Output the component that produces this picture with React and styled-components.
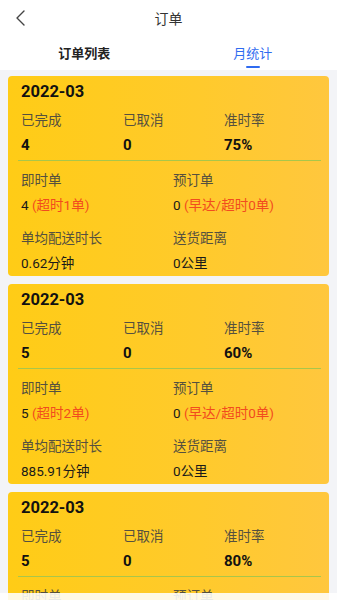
import React from 'react'
import styled, { createGlobalStyle } from 'styled-components'

const GlobalStyle = createGlobalStyle`
   body {
      margin: 0;
      background: #f3f4f7;
      font-family: Roboto, "Noto Sans CJK SC", sans-serif;
   }
`

const Page = styled.div`
   height: 600px;
   overflow: hidden;
   position: relative;
   background: #f3f4f7;
`

const Header = styled.header`
   background: #ffffff;
`

const TitleBar = styled.div`
   height: 36px;
   display: flex;
   align-items: center;
   justify-content: center;
   position: relative;
   font-size: 14px;
   color: #333;
`

const BackButton = styled.span`
   position: absolute;
   left: 14px;
   top: 9px;
   display: flex;
`

const Tabs = styled.nav`
   display: flex;
   height: 34px;
`

const Tab = styled.div`
   flex: 1;
   display: flex;
   flex-direction: column;
   align-items: center;
   padding-top: 7px;
   font-size: 13px;
   font-weight: ${p => (p.active ? 400 : 700)};
   color: ${p => (p.active ? '#2f6bf0' : '#222')};

   &::after {
      content: '';
      margin-top: 4px;
      width: 14px;
      height: 2px;
      border-radius: 1px;
      background: ${p => (p.active ? '#2f6bf0' : 'transparent')};
   }
`

const List = styled.div`
   display: flex;
   flex-direction: column;
   gap: 8px;
   padding: 6px 8px 0;
`

const Card = styled.div`
   background: linear-gradient(90deg, #ffcc16 0%, #ffca2c 60%, #ffc73e 100%);
   border-radius: 4px;
   padding: 6px 8px 3px 13px;
   box-sizing: border-box;
   height: 200px;
`

const Month = styled.div`
   font-size: 16.5px;
   font-weight: 700;
   line-height: 20px;
   color: #111;
`

const Grid = styled.div`
   display: grid;
   grid-template-columns: ${p => p.cols};
   row-gap: 5px;
   margin-top: ${p => p.top}px;
`

const Label = styled.div`
   font-size: 13.5px;
   line-height: 20px;
   color: #55503f;
`

const BigValue = styled.div`
   font-size: 15px;
   font-weight: 700;
   line-height: 20px;
   color: #111;
`

const Value = styled.div`
   font-size: 13.5px;
   line-height: 20px;
   color: #1a1a1a;
`

const Warn = styled.span`
   color: #f24b1e;
`

const Divider = styled.div`
   height: 1px;
   background: #a9c64a;
   margin: 5px 0 0 -3px;
`

const BottomFade = styled.div`
   position: absolute;
   left: 0;
   right: 0;
   bottom: 0;
   height: 7px;
   background: rgba(255, 255, 255, 0.88);
`

const data = [
   { done: 4, cancel: 0, rate: '75%', instant: 4, late: 1, avg: '0.62' },
   { done: 5, cancel: 0, rate: '60%', instant: 5, late: 2, avg: '885.91' },
   { done: 5, cancel: 0, rate: '80%', instant: 5, late: 1, avg: '12.30' },
]

const StatCard = ({ item }) => (
   <Card>
      <Month>2022-03</Month>
      <Grid cols="102px 101px 1fr" top={8}>
         <Label>已完成</Label>
         <Label>已取消</Label>
         <Label>准时率</Label>
         <BigValue>{item.done}</BigValue>
         <BigValue>{item.cancel}</BigValue>
         <BigValue>{item.rate}</BigValue>
      </Grid>
      <Divider />
      <Grid cols="152px 1fr" top={9}>
         <Label>即时单</Label>
         <Label>预订单</Label>
         <Value>
            {item.instant} <Warn>(超时{item.late}单)</Warn>
         </Value>
         <Value>
            0 <Warn>(早达/超时0单)</Warn>
         </Value>
      </Grid>
      <Grid cols="152px 1fr" top={13}>
         <Label>单均配送时长</Label>
         <Label>送货距离</Label>
         <Value>{item.avg}分钟</Value>
         <Value>0公里</Value>
      </Grid>
   </Card>
)

const App = () => {
   return (
      <Page>
         <GlobalStyle />
         <Header>
            <TitleBar>
               <BackButton>
                  <svg width="12" height="18" viewBox="0 0 12 18" fill="none">
                     <path d="M10 2 L3 9 L10 16" stroke="#444" strokeWidth="1.4" strokeLinecap="round" strokeLinejoin="round" />
                  </svg>
               </BackButton>
               订单
            </TitleBar>
            <Tabs>
               <Tab>订单列表</Tab>
               <Tab active>月统计</Tab>
            </Tabs>
         </Header>
         <List>
            {data.map((item, i) => (
               <StatCard key={i} item={item} />
            ))}
         </List>
         <BottomFade />
      </Page>
   )
}

export default App
